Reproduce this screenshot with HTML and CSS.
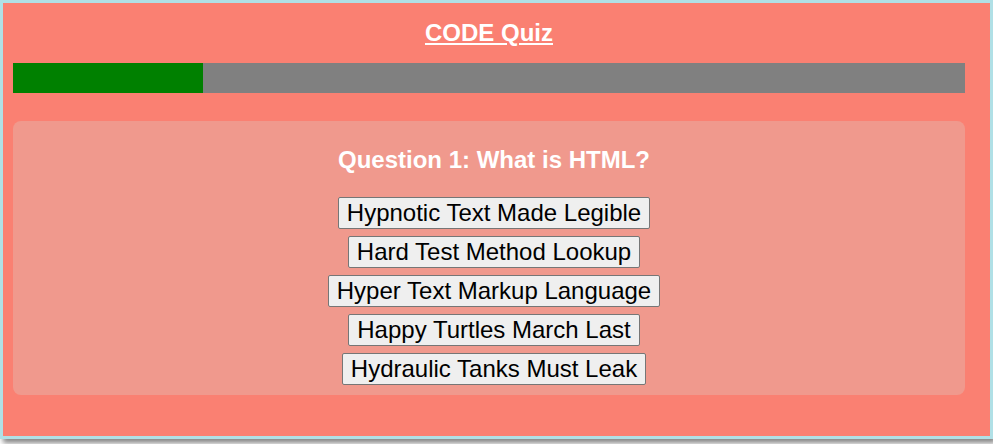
FILE: index.html
```html
<!DOCTYPE html>
<html>
<head>
<meta charset="utf-8">
<title>CODE Quiz</title>
<link rel="stylesheet" href="styles.css">
</head>
<body>
<div class="quiz">
  <h1 class="quiz-title">CODE Quiz</h1>
  <div class="progress"><div class="progress-fill" style="width: 20%"></div></div>
  <div class="panel">
    <h2 class="question">Question 1: What is HTML?</h2>
    <div class="answers">
      <button class="answer">Hypnotic Text Made Legible</button>
      <button class="answer">Hard Test Method Lookup</button>
      <button class="answer">Hyper Text Markup Language</button>
      <button class="answer">Happy Turtles March Last</button>
      <button class="answer">Hydraulic Tanks Must Leak</button>
    </div>
  </div>
</div>
</body>
</html>
```
FILE: styles.css
```css
html, body {
  margin: 0;
  padding: 0;
  background: #ffffff;
}
body {
  font-family: "Liberation Sans", Arial, sans-serif;
  min-height: 444px;
}
.quiz {
  box-sizing: border-box;
  width: 993px;
  border: 3px solid #b0e0e6;
  background: #fa8072;
  padding: 16px 25px 41px 10px;
  box-shadow: 3px 4px 5px #888888;
}
.quiz-title {
  margin: 0 0 16px;
  font-size: 24px;
  line-height: 28px;
  font-weight: bold;
  color: #ffffff;
  text-align: center;
  text-decoration: underline;
}
.progress {
  height: 30px;
  background: #808080;
  margin-bottom: 28px;
}
.progress-fill {
  height: 100%;
  background: #008000;
}
.panel {
  background: #f0998d;
  border-radius: 8px;
  padding: 25px 0 10px 10px;
}
.question {
  margin: 0 0 23px;
  font-size: 24px;
  line-height: 28px;
  font-weight: bold;
  color: #ffffff;
  text-align: center;
}
.answers {
  display: flex;
  flex-direction: column;
  align-items: center;
  gap: 7px;
}
.answer {
  font-family: "Liberation Sans", Arial, sans-serif;
  font-size: 24px;
  line-height: 28px;
  height: 32px;
  padding: 1px 8px;
  border: 1px solid #767676;
  border-radius: 2px;
  background: #efefef;
  color: #000000;
  cursor: pointer;
}
```
